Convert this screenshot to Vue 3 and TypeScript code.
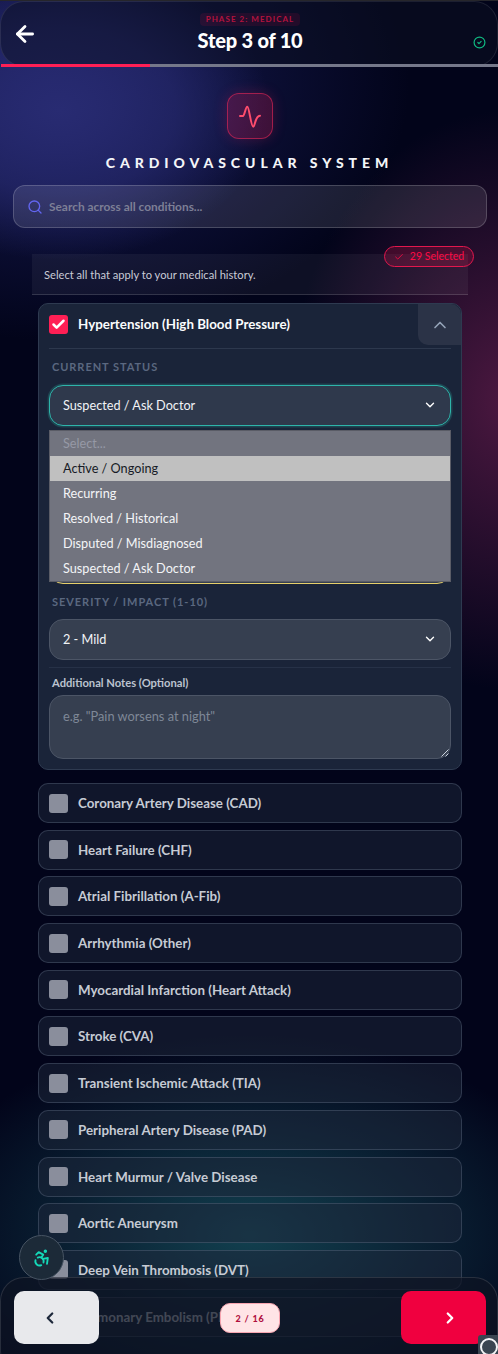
<script setup lang="ts">
const options: string[] = ['Recurring', 'Resolved / Historical', 'Disputed / Misdiagnosed', 'Suspected / Ask Doctor']
const conditions: string[] = [
  'Coronary Artery Disease (CAD)',
  'Heart Failure (CHF)',
  'Atrial Fibrillation (A-Fib)',
  'Arrhythmia (Other)',
  'Myocardial Infarction (Heart Attack)',
  'Stroke (CVA)',
  'Transient Ischemic Attack (TIA)',
  'Peripheral Artery Disease (PAD)',
  'Heart Murmur / Valve Disease',
  'Aortic Aneurysm',
  'Deep Vein Thrombosis (DVT)',
  'Pulmonary Embolism (PE)',
]
</script>

<template>
  <div class="page">
    <header class="top">
      <svg class="back" viewBox="0 0 24 24" fill="none" stroke="#fff" stroke-width="2.6" stroke-linecap="round" stroke-linejoin="round"><path d="m12 19-7-7 7-7" /><path d="M19 12H5" /></svg>
      <div class="top-mid">
        <span class="phase">PHASE 2: MEDICAL</span>
        <span class="step">Step 3 of 10</span>
      </div>
      <svg class="saved" viewBox="0 0 24 24" fill="none" stroke="#10b981" stroke-width="2.2" stroke-linecap="round" stroke-linejoin="round"><circle cx="12" cy="12" r="10" /><path d="m9 12 2 2 4-4" /></svg>
      <div class="progress"><div class="progress-fill"></div></div>
    </header>

    <main class="content">
      <div class="sys-icon">
        <svg viewBox="0 0 24 24" width="24" height="24" fill="none" stroke="#ff4d6d" stroke-width="2" stroke-linecap="round" stroke-linejoin="round"><path d="M2 12h3c1.500 0 2.500-9.300 4.300-9.300 2 0 3.500 20 6 20 2 0 1.500-11 6.700-11" /></svg>
      </div>
      <h1 class="sys-title">CARDIOVASCULAR SYSTEM</h1>

      <div class="search">
        <svg viewBox="0 0 24 24" width="16" height="16" fill="none" stroke="#6366f1" stroke-width="2" stroke-linecap="round" stroke-linejoin="round"><circle cx="11" cy="11" r="8" /><path d="m21 21-4.300-4.300" /></svg>
        <span>Search across all conditions...</span>
      </div>

      <div class="list">
        <div class="intro">
          <span>Select all that apply to your medical history.</span>
          <div class="badge">
            <svg viewBox="0 0 24 24" width="10" height="10" fill="none" stroke="#ff0a45" stroke-width="2" stroke-linecap="round" stroke-linejoin="round"><path d="M20 6 9 17l-5-5" /></svg>
            29 Selected
          </div>
        </div>

        <section class="card">
          <div class="card-head">
            <span class="box on">
              <svg viewBox="0 0 24 24" width="15" height="15" fill="none" stroke="#fff" stroke-width="4" stroke-linecap="round" stroke-linejoin="round"><path d="M20 6 9 17l-5-5" /></svg>
            </span>
            <span class="card-name">Hypertension (High Blood Pressure)</span>
            <span class="collapse">
              <svg viewBox="0 0 24 24" width="20" height="20" fill="none" stroke="#94a3b8" stroke-width="2" stroke-linecap="round" stroke-linejoin="round"><path d="m18 15-6-6-6 6" /></svg>
            </span>
          </div>

          <div class="card-body">
            <div class="label">CURRENT STATUS</div>
            <div class="select focus">
              <span>Suspected / Ask Doctor</span>
              <svg viewBox="0 0 24 24" width="14" height="14" fill="none" stroke="#fff" stroke-width="2.400" stroke-linecap="round" stroke-linejoin="round"><path d="m6 9 6 6 6-6" /></svg>
            </div>
            <div class="dropdown">
              <div class="opt muted">Select...</div>
              <div class="opt hover">Active / Ongoing</div>
              <div v-for="o in options" :key="o" class="opt">{{ o }}</div>
            </div>
            <div class="covered"></div>

            <div class="label severity">SEVERITY / IMPACT (1-10)</div>
            <div class="select plain">
              <span>2 - Mild</span>
              <svg viewBox="0 0 24 24" width="14" height="14" fill="none" stroke="#fff" stroke-width="2.400" stroke-linecap="round" stroke-linejoin="round"><path d="m6 9 6 6 6-6" /></svg>
            </div>
            <div class="notes-label">Additional Notes (Optional)</div>
            <div class="notes">
              <span>e.g. "Pain worsens at night"</span>
              <svg class="grip" viewBox="0 0 8 8" width="8" height="8" fill="none" stroke="#cbd5e1" stroke-width="1"><path d="M0.500 7.500 7.500 0.500M4.500 7.500 7.500 4.500" /></svg>
            </div>
          </div>
        </section>

        <div v-for="c in conditions" :key="c" class="row">
          <span class="box"></span>
          <span class="row-name">{{ c }}</span>
        </div>
      </div>
    </main>

    <button class="a11y" type="button" aria-label="Accessibility">
      <svg viewBox="0 0 24 24" width="20" height="20" fill="none" stroke="#14d8b8" stroke-width="2.200" stroke-linecap="round" stroke-linejoin="round"><circle cx="16" cy="4" r="1" /><path d="m18 19 1-7-6 1" /><path d="m5 8 3-3 5.500 3-2.360 3.500" /><path d="M4.240 14.500a5 5 0 0 0 6.880 6" /><path d="M13.760 17.500a5 5 0 0 0-6.880-6" /></svg>
    </button>

    <footer class="bottom">
      <button class="nav prev" type="button" aria-label="Previous">
        <svg viewBox="0 0 24 24" width="18" height="18" fill="none" stroke="#1e293b" stroke-width="3" stroke-linecap="round" stroke-linejoin="round"><path d="m15 18-6-6 6-6" /></svg>
      </button>
      <div class="pager">2 / 16</div>
      <button class="nav next" type="button" aria-label="Next">
        <svg viewBox="0 0 24 24" width="18" height="18" fill="none" stroke="#fff" stroke-width="3" stroke-linecap="round" stroke-linejoin="round"><path d="m9 18 6-6-6-6" /></svg>
      </button>
    </footer>

    <div class="corner"><span class="ring"></span></div>
  </div>
</template>

<style>
html, body { margin: 0; background: #02041a; }
</style>

<style scoped>
.page {
  position: relative;
  width: 498px;
  height: 1354px;
  overflow: hidden;
  font-family: "Lato", "Inter", sans-serif;
  color: #fff;
  background:
    radial-gradient(ellipse 210px 150px at 60px 110px, #282b72 0%, rgba(40, 43, 114, 0.65) 55%, rgba(40, 43, 114, 0) 100%),
    radial-gradient(ellipse 360px 260px at 50px 80px, rgba(26, 30, 92, 0.95) 0%, rgba(26, 30, 92, 0) 100%),
    radial-gradient(ellipse 220px 290px at 510px 400px, #4c1840 0%, rgba(76, 24, 64, 0) 100%),
    radial-gradient(ellipse 340px 200px at 250px 1235px, #12404f 0%, rgba(18, 64, 79, 0) 100%),
    #02041a;
}
.top {
  position: relative;
  box-sizing: border-box;
  height: 66px;
  margin-top: 1px;
  display: grid;
  grid-template-columns: 51px 1fr 49px;
  align-items: center;
  background: rgba(12, 15, 34, 0.5);
  border: 1px solid rgba(255, 255, 255, 0.09);
  border-radius: 24px;
}
.page::before {
  content: "";
  position: absolute;
  inset: 0 0 auto;
  height: 1px;
  background: #26262b;
}
.back { width: 26px; height: 26px; margin-left: 11px; }
.top-mid { display: flex; flex-direction: column; align-items: center; padding-bottom: 3px; }
.phase {
  padding: 1px 6px;
  font-size: 8px;
  font-weight: 700;
  letter-spacing: 1.050px;
  line-height: 11px;
  color: #b4133e;
  background: rgba(255, 10, 69, 0.1);
  border-radius: 4px;
}
.step { margin-top: 1px; font-size: 20px; line-height: 26px; font-weight: 900; letter-spacing: -0.2px; }
.saved { width: 13px; height: 13px; justify-self: end; margin-right: 11px; margin-top: 16px; }
.progress {
  position: absolute;
  left: 0;
  right: -1px;
  bottom: -1px;
  height: 3px;
  background: #75788a;
}
.progress-fill { width: 149px; height: 100%; background: #ff1f55; }
.content { display: flex; flex-direction: column; align-items: center; padding: 26px 0 0 2px; }
.sys-icon {
  box-sizing: border-box;
  width: 46px;
  height: 46px;
  display: flex;
  align-items: center;
  justify-content: center;
  background: rgba(244, 30, 85, 0.22);
  border: 1.500px solid rgba(244, 40, 90, 0.55);
  border-radius: 12px;
  box-shadow: 0 0 14px rgba(244, 30, 85, 0.22);
}
.sys-title {
  margin: 14px 0 0 -1px;
  font-size: 14px;
  line-height: 20px;
  font-weight: 900;
  letter-spacing: 4.950px;
  color: #f4f5f8;
}
.search {
  box-sizing: border-box;
  width: 474px;
  height: 43px;
  margin-top: 12px;
  padding-left: 13px;
  display: flex;
  align-items: center;
  gap: 6px;
  font-size: 11.900px;
  font-weight: 700;
  color: #7d7f96;
  background: rgba(255, 255, 255, 0.1);
  border: 1px solid rgba(255, 255, 255, 0.18);
  border-radius: 12px;
}
.list { width: 424px; margin-top: 26px; display: flex; flex-direction: column; }
.intro {
  position: relative;
  box-sizing: border-box;
  width: 436px;
  height: 41px;
  margin: 0 -6px 8px;
  padding: 13px 12px 0;
  font-size: 11.150px;
  line-height: 15px;
  color: #c9cbd6;
  background: rgba(255, 255, 255, 0.05);
  border-bottom: 1px solid rgba(255, 255, 255, 0.14);
}
.badge {
  position: absolute;
  top: -8px;
  right: -6px;
  box-sizing: border-box;
  width: 90px;
  height: 21px;
  display: flex;
  align-items: center;
  justify-content: center;
  gap: 6px;
  font-size: 10.500px;
  color: #ff0a45;
  background: rgba(240, 20, 75, 0.2);
  border: 1px solid #e3174d;
  border-radius: 11px;
}
.card {
  box-sizing: border-box;
  height: 467px;
  margin-bottom: 13px;
  background: #1a2439;
  border: 1px solid #2e3a50;
  border-radius: 10px;
}
.card-head {
  position: relative;
  box-sizing: border-box;
  height: 45px;
  margin: 0 10px;
  padding-bottom: 3px;
  display: flex;
  align-items: center;
  gap: 10px;
  border-bottom: 1px solid #2d384d;
}
.box {
  flex: none;
  width: 19px;
  height: 19px;
  display: flex;
  align-items: center;
  justify-content: center;
  background: #8a8e9c;
  border-radius: 3px;
}
.box.on { background: #ff1f55; }
.card-name { margin-bottom: 2px; font-size: 13.350px; font-weight: 700; color: #fbfcfd; }
.collapse {
  position: absolute;
  top: 0;
  right: -10px;
  width: 43px;
  height: 41px;
  display: flex;
  align-items: center;
  justify-content: center;
  background: #2b3347;
  border-radius: 0 10px 0 10px;
}
.card-body { position: relative; padding: 0 10px; }
.label {
  padding: 10px 3px 0;
  font-size: 11px;
  line-height: 15px;
  font-weight: 700;
  letter-spacing: 0.950px;
  color: #5b6880;
}
.select {
  box-sizing: border-box;
  height: 41px;
  margin-top: 11px;
  padding: 0 13px 2px;
  display: flex;
  align-items: center;
  justify-content: space-between;
  font-size: 12.700px;
  border-radius: 14px;
  color: #f1f3f6;
}
.select.focus {
  background: #2f394c;
  border: 1px solid #2eb4aa;
  box-shadow: 0 0 0 1.500px rgba(46, 180, 170, 0.22);
}
.select.plain { margin-top: 10px; background: #363f50; border: 1px solid #4c5566; }
.dropdown {
  position: absolute;
  top: 81px;
  left: 10px;
  right: 10px;
  z-index: 2;
  box-sizing: border-box;
  height: 152px;
  background: #72747f;
  border: 1px solid #5a5c66;
  font-size: 12.700px;
}
.opt { box-sizing: border-box; height: 25px; padding: 0 0 2px 13px; display: flex; align-items: center; color: #f4f5f7; }
.opt.muted { color: #9699a6; }
.opt.hover { background: #c0c0c0; color: #171b26; }
.covered {
  box-sizing: border-box;
  height: 41px;
  margin-top: 117px;
  background: #363f50;
  border: 1px solid #e6cf6a;
  border-radius: 14px;
}
.label.severity { padding-top: 10px; }
.notes-label {
  margin-top: 7px;
  padding: 7px 3px 0;
  font-size: 11.200px;
  line-height: 15px;
  font-weight: 700;
  color: #bcc3cf;
  border-top: 1px solid #263147;
}
.notes {
  position: relative;
  box-sizing: border-box;
  height: 64px;
  margin-top: 5px;
  padding: 11px 13px;
  font-size: 12.800px;
  line-height: 18px;
  color: #7f8897;
  background: #363f50;
  border: 1px solid #4c5566;
  border-radius: 14px;
}
.grip { position: absolute; right: 1px; bottom: 1px; }
.row {
  flex: none;
  box-sizing: border-box;
  height: 40px;
  margin-bottom: 6.700px;
  padding: 0 10px;
  display: flex;
  align-items: center;
  gap: 10px;
  background: rgba(30, 41, 59, 0.52);
  border: 1px solid rgba(120, 135, 160, 0.3);
  border-radius: 10px;
}
.row-name { font-size: 13.350px; font-weight: 700; color: #c6cbd4; }
.a11y {
  position: absolute;
  left: 19px;
  top: 1235px;
  z-index: 4;
  width: 45px;
  height: 45px;
  padding: 0;
  display: flex;
  align-items: center;
  justify-content: center;
  background: #1c2a38;
  border: 1px solid #475463;
  border-radius: 50%;
}
.bottom {
  position: absolute;
  left: 0;
  right: 0;
  bottom: -20px;
  z-index: 3;
  box-sizing: border-box;
  height: 97px;
  padding: 13px 11px 0 13px;
  display: flex;
  align-items: flex-start;
  justify-content: space-between;
  background: rgba(14, 19, 35, 0.72);
  border: 1px solid rgba(255, 255, 255, 0.12);
  border-radius: 24px;
}
.nav {
  width: 85px;
  height: 53px;
  padding: 0;
  display: flex;
  align-items: center;
  justify-content: center;
  border: none;
  border-radius: 10px;
}
.prev { background: #e8e9ec; padding-right: 13px; }
.next { background: #f0003f; padding-left: 12px; }
.pager {
  box-sizing: border-box;
  width: 60px;
  height: 30px;
  margin-top: 12px;
  display: flex;
  align-items: center;
  justify-content: center;
  font-size: 9px;
  font-weight: 900;
  letter-spacing: 0.8px;
  color: #b0103f;
  background: #ffe4e6;
  border: 1px solid #f8a5b0;
  border-radius: 10px;
}
.corner {
  position: absolute;
  right: 0;
  bottom: 0;
  z-index: 5;
  width: 20px;
  height: 19px;
  background: #3a4551;
  border-radius: 3px 0 0 0;
  overflow: hidden;
}
.ring {
  position: absolute;
  left: 2px;
  top: 3px;
  width: 18px;
  height: 18px;
  box-sizing: border-box;
  border: 2.500px solid #f3f4f6;
  border-radius: 50%;
}
</style>
